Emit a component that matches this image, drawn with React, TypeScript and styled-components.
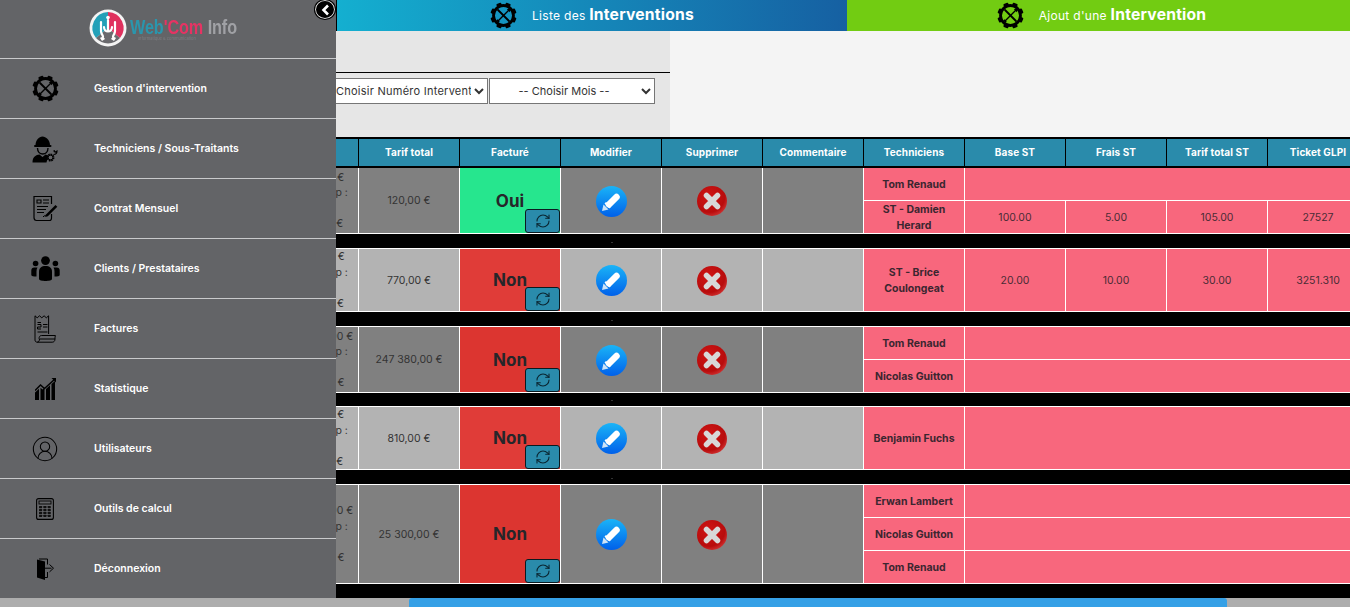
import React from 'react';
import styled, { createGlobalStyle } from 'styled-components';
import { CircleUserRound, RefreshCw } from 'lucide-react';

const Global = createGlobalStyle`
  html, body { margin: 0; padding: 0; height: 100%; overflow: hidden; }
  body { font-family: Inter, "Noto Sans", "Liberation Sans", sans-serif; background: #000; }
  * { box-sizing: border-box; }
`;

const Page = styled.div`
  position: relative;
  width: 1350px;
  height: 607px;
  display: flex;
  flex-direction: column;
  overflow: hidden;
  background: #000;
`;

/* ---------- Sidebar ---------- */
const Sidebar = styled.nav`
  position: absolute;
  top: 0;
  left: 0;
  bottom: 9px;
  width: 336px;
  background: #636467;
  z-index: 5;
  display: flex;
  flex-direction: column;
`;
const LogoBar = styled.div`
  height: 58px;
  display: flex;
  align-items: flex-start;
  padding: 9px 0 0 89px;
  gap: 3px;
`;
const LogoWords = styled.div`
  display: flex;
  flex-direction: column;
  margin-top: 9px;
  filter: blur(0.35px);
`;
const LogoName = styled.div`
  font-family: "Liberation Sans Narrow", "Liberation Sans", sans-serif;
  font-weight: 700;
  font-size: 20px;
  line-height: 18px;
  letter-spacing: -0.1px;
  white-space: nowrap;
  transform: scaleX(0.81);
  transform-origin: left center;
  width: 107px;
`;
const LogoPart = styled.span<{ $c: string }>`
  color: ${p => p.$c};
`;
const LogoTag = styled.div`
  font-size: 4px;
  line-height: 5px;
  color: #7d7e82;
  padding-left: 8px;
  white-space: nowrap;
`;
const CloseBtn = styled.button`
  position: absolute;
  top: 0;
  right: 1px;
  width: 20px;
  height: 19px;
  padding: 0;
  border-radius: 50%;
  background: #000;
  border: 1px solid #ddd;
  outline: 1px solid #000;
  display: flex;
  align-items: center;
  justify-content: center;
`;
const MenuItem = styled.div`
  height: 60px;
  border-top: 1px solid #c9cacc;
  display: flex;
  align-items: center;
`;
const MenuIcon = styled.span`
  width: 90px;
  flex: none;
  display: flex;
  justify-content: center;
  color: #000;
`;
const MenuLabel = styled.span`
  margin-left: 4px;
  color: #fff;
  font-size: 10.5px;
  font-weight: 600;
  letter-spacing: 0;
`;

/* ---------- Header tabs ---------- */
const Tabs = styled.header`
  height: 31px;
  margin-left: 337px;
  display: flex;
  flex: none;
`;
const Tab = styled.div<{ $green?: boolean }>`
  width: ${p => (p.$green ? 503 : 510)}px;
  background: ${p => (p.$green ? '#72cc12' : 'linear-gradient(90deg, #14afd0 0%, #1660a2 100%)')};
  display: flex;
  align-items: center;
  justify-content: center;
  gap: 15px;
  color: #fff;
  padding-left: ${p => (p.$green ? 6 : 0)}px;
`;
const TabGear = styled.span`
  display: flex;
  margin-bottom: 1px;
`;
const TabText = styled.span`
  font-size: 12px;
  letter-spacing: 0.3px;
  white-space: nowrap;
  margin-bottom: 3px;
`;
const TabStrong = styled.strong`
  font-size: 15.7px;
  font-weight: 700;
  letter-spacing: 0.2px;
`;

/* ---------- Filter band ---------- */
const FilterBand = styled.section`
  height: 106px;
  flex: none;
  display: flex;
  background: #f4f4f4;
`;
const FilterPanel = styled.div`
  width: 670px;
  background: #e6e6e6;
`;
const FilterTop = styled.div`
  height: 42px;
  border-bottom: 1px solid #000;
`;
const FilterRow = styled.div`
  display: flex;
  margin: 5px 0 0 317px;
  gap: 1px;
`;
const Select = styled.select<{ $w: number; $ls: number; $pr: number }>`
  width: ${p => p.$w}px;
  height: 26px;
  background: #fff;
  border: 1px solid #767676;
  color: #333;
  font-family: Inter, sans-serif;
  font-size: 11px;
  letter-spacing: ${p => p.$ls}px;
  text-align: center;
  text-align-last: center;
  padding: 0 ${p => p.$pr}px 0 0;
`;

/* ---------- Table ---------- */
const TableWrap = styled.div`
  flex: 1;
  min-height: 0;
  overflow: hidden;
  background: #000;
`;
const Table = styled.table`
  table-layout: fixed;
  width: 1111px;
  margin-left: 258px;
  border-collapse: separate;
  border-spacing: 0;
  font-size: 10.5px;
  line-height: 15.5px;
  color: #333;
`;
const HeadCell = styled.th`
  width: 101px;
  height: 31px;
  padding: 0;
  background: #2a8bab;
  color: #fff;
  font-size: 10px;
  font-weight: 700;
  letter-spacing: 0.1px;
  border-top: 2px solid #000;
  border-bottom: 2px solid #000;
  border-right: 1px solid #000;
`;
const Spacer = styled.tr<{ $h: number }>`
  height: ${p => p.$h}px;
  background: #000;
`;
const SpacerCell = styled.td`
  padding: 0;
  text-align: center;
  line-height: 0;
`;
const Dot = styled.span`
  display: inline-block;
  width: 2px;
  height: 1px;
  background: #333;
`;
const Tr = styled.tr<{ $h: number }>`
  height: ${p => p.$h}px;
`;
const Cell = styled.td<{ $tone: string; $top?: boolean }>`
  position: relative;
  padding: 1px 0 0;
  text-align: center;
  vertical-align: middle;
  overflow: hidden;
  white-space: nowrap;
  background: ${p => p.$tone};
  border-right: 1px solid #fff;
  border-bottom: 1px solid #fff;
  border-top: ${p => (p.$top ? '1px solid #fff' : '0')};
`;
const NoteCell = styled(Cell)`
  padding: 0;
`;
const BilledCell = styled(Cell)`
  padding: 2px 0 0;
  font-size: 17px;
  font-weight: 700;
  color: #26262a;
`;
const TechCell = styled(Cell)`
  padding: 1px 6px 0;
  font-weight: 700;
  color: #3b2630;
  white-space: normal;
`;
const PinkCell = styled(Cell)`
  color: #4a2c36;
`;
const SwapBtn = styled.button`
  position: absolute;
  right: 0;
  bottom: 0;
  width: 35px;
  height: 24px;
  padding: 0;
  border: 1px solid #0a1a20;
  border-radius: 3px;
  background: #2a8bab;
  color: #0a2530;
  display: flex;
  align-items: center;
  justify-content: center;
`;
const ActionIcon = styled.span`
  display: flex;
  justify-content: center;
  align-items: center;
`;
const NoteLine = styled.div`
  min-height: 15.5px;
`;

/* ---------- Scrollbar ---------- */
const ScrollTrack = styled.div`
  height: 9px;
  flex: none;
  background: #adadad;
  padding-left: 409px;
`;
const ScrollThumb = styled.div`
  width: 818px;
  height: 100%;
  background: #35a0e6;
  border-radius: 3px 3px 0 0;
`;

/* ---------- Icons ---------- */
const Gear = ({ size = 27 }: { size?: number }) => (
  <svg width={size} height={size} viewBox="0 0 32 32">
    {[0, 45, 90, 135, 180, 225, 270, 315].map(a => (
      <rect key={a} x="13" y="0.5" width="6" height="5" rx="1" fill="#000" transform={`rotate(${a + 22.5} 16 16)`} />
    ))}
    <circle cx="16" cy="16" r="11.8" fill="none" stroke="#000" strokeWidth="3.4" />
    <path d="M9.5 9.5 22.5 22.5" stroke="#000" strokeWidth="2.2" strokeLinecap="round" />
    <path d="M22.5 9.5 9.5 22.5" stroke="#000" strokeWidth="1.6" strokeLinecap="round" />
    <path d="M20 8.5l3.5 3.5 1-3-1.5-1.5zM7.5 22l2.5 2.5 1.5-1.5-2.500-2.500z" fill="#000" />
  </svg>
);
const TechIcon = () => (
  <svg width="26" height="28" viewBox="0 0 26 28">
    <path d="M3.5 10.5C3.5 5 7 1.5 10.5 1.5S18 5 18 10.5z" fill="#000" />
    <rect x="2" y="10" width="17.5" height="2" rx="1" fill="#000" />
    <path d="M5.5 13c0 8 10.500 8 10.500 0" fill="none" stroke="#000" strokeWidth="1.4" />
    <path d="M0.500 27.500c0-6 3.500-7.500 7-8l3 2.500 3-2.500c1 .2 2 .5 2.800 1l-1.800 7z" fill="#000" />
    <circle cx="18.500" cy="22.500" r="3" fill="none" stroke="#000" strokeWidth="2" strokeDasharray="1.600 .7" />
    <circle cx="18.500" cy="22.500" r="2.400" fill="none" stroke="#000" strokeWidth="1" />
    <path d="M21.500 19.500c2.500 0 3.500-1.500 3.500-3.500l-1.500 1-1.300-.5v-1.500" fill="none" stroke="#000" strokeWidth="1.200" />
  </svg>
);
const ContractIcon = () => (
  <svg width="26" height="27" viewBox="0 0 26 27" fill="none" stroke="#000">
    <path d="M19.500 9V1.500H2v21c0 1.800 1 3 2.500 3h13c1.200 0 2-1 2-2.500v-4" strokeWidth="1.200" />
    <path d="M5 5h4v3H5zM11 5h6M11 8h6M5 11.500h11M5 14.500h9M5 17.500h7" strokeWidth="1.100" />
    <path d="M11 22c1.500-2 2.500-1 3.500-1.500" strokeWidth="1" />
    <path d="M14 19.500 23.500 10l1.800 1.800-9.500 9.500-2.600.8z" fill="#000" stroke="none" />
  </svg>
);
const UsersIcon = () => (
  <svg width="29" height="25" viewBox="0 0 29 25" fill="#000">
    <circle cx="14.500" cy="4.600" r="4.400" />
    <circle cx="4.600" cy="7.500" r="2.800" />
    <circle cx="24.400" cy="7.500" r="2.800" />
    <path d="M8 23V15.500C8 12 10.500 10 14.500 10S21 12 21 15.500V23c0 2.600-13 2.600-13 0z" />
    <path d="M6.500 11.500H3.200C1.400 11.500.3 12.800.3 14.500V19c0 1.200 2.200 1.600 5.200 1.600V15.500c0-1.500.3-2.900 1-4z" />
    <path d="M22.500 11.500h3.300c1.800 0 2.900 1.300 2.900 3V19c0 1.200-2.200 1.600-5.200 1.600V15.500c0-1.500-.3-2.900-1-4z" />
  </svg>
);
const InvoiceIcon = () => (
  <svg width="22" height="28" viewBox="0 0 22 28" fill="none" stroke="#000" strokeWidth="1">
    <path d="M1 .8l2.200 2 2.300-2 2.300 2 2.300-2 2.200 2 2.300-2V19" />
    <path d="M1 .8V25c0 1.400 1 2.200 2.200 2.200h15c1.500 0 2.800-1 2.800-3.200H5.500c0 2-1 3.200-2.300 3.200" />
    <path d="M5 23.800c0-2 1-3.300 2.400-3.300h14c-.4 1-.4 2.300-.4 3.500" />
    <path d="M3.500 7.500H7M3.500 9.500h3.500v2.500H3.500v2H7M9 9.500h4.500M9 12h4.500M3.500 17h10" />
  </svg>
);
const ChartIcon = () => (
  <svg width="21" height="22" viewBox="0 0 21 22" fill="#000">
    <path d="M0 22v-7.500l4-3.800V22zM5.500 22V9.700l2 1.800 2-2V22zM11 22v-11l4-3.800V22zM16.500 22V6l3.500-3V22z" />
    <path d="M0 12.500 5.500 7l4 3.500L20 1" fill="none" stroke="#000" strokeWidth="1.500" />
    <path d="M16.500 0H21v4.500z" />
  </svg>
);
const CalcIcon = () => (
  <svg width="18" height="22" viewBox="0 0 18 22">
    <rect x=".6" y=".6" width="16.800" height="20.800" rx="2" fill="none" stroke="#000" strokeWidth="1.100" />
    <rect x="3" y="3" width="12" height="3" fill="none" stroke="#000" strokeWidth=".9" />
    {[0, 1, 2, 3].flatMap(r =>
      [0, 1, 2].map(c => <rect key={`${r}${c}`} x={3 + c * 4.3} y={8 + r * 2.9} width="3.200" height="2.200" rx=".6" fill="#111" />)
    )}
  </svg>
);
const DoorIcon = () => (
  <svg width="19" height="22" viewBox="0 0 19 22">
    <path d="M1 1.500 9 3.500V22L1 19.500z" fill="#000" />
    <path d="M3 1h8.500v5.500M11.500 14v5.500H9" fill="none" stroke="#000" strokeWidth="1" />
    <path d="M9 10.200h6.500M13.500 6.500l4 3.700-4 3.700" fill="none" stroke="#000" strokeWidth="1" />
  </svg>
);
const Chevron = () => (
  <svg width="9" height="12" viewBox="0 0 9 12">
    <path d="M7 1.500 2.500 6 7 10.500" fill="none" stroke="#fff" strokeWidth="2.600" />
  </svg>
);
const LogoMark = () => (
  <svg width="38" height="38" viewBox="0 0 38 38">
    <circle cx="19" cy="19" r="18.500" fill="#f4f4f4" />
    <path d="M19 3A16 16 0 0 0 7 29L19 19z" fill="#23a0b8" />
    <path d="M19 3A16 16 0 0 1 31 29L19 19z" fill="#e0315e" />
    <path d="M7 29A16 16 0 0 0 31 29L19 19z" fill="#6a6a6e" />
    <g fill="none" stroke="#fff" strokeWidth="2.200" strokeLinecap="round">
      <path d="M12 13v9c0 3 2 4 2 6" />
      <path d="M19 11v11" />
      <path d="M26 13v9c0 3-2 4-2 6" />
      <path d="M15 18c0 6 8 6 8 0" />
    </g>
    <circle cx="19" cy="8.500" r="1.800" fill="#fff" />
    <path d="M11 29c2-2 4-1 5 1l-3 2zM27 29c-2-2-4-1-5 1l3 2z" fill="#fff" />
  </svg>
);
const EditIcon = ({ id }: { id: string }) => (
  <svg width="31" height="31" viewBox="0 0 31 31">
    <defs>
      <linearGradient id={id} x1="0" y1="0" x2="0" y2="1">
        <stop offset="0" stopColor="#1ab4f7" />
        <stop offset="1" stopColor="#0060ea" />
      </linearGradient>
    </defs>
    <circle cx="15.500" cy="15.500" r="15.500" fill={`url(#${id})`} />
    <path d="M13 18.500 20.500 11" stroke="#fff" strokeWidth="6.500" strokeLinecap="round" />
    <path d="M6 25l1.500-6.500 5 5z" fill="#cfe4f7" />
    <path d="M8.500 17.500l5 5 1.500-1.500-5-5z" fill="#fff" />
  </svg>
);
const DeleteIcon = ({ id }: { id: string }) => (
  <svg width="30" height="30" viewBox="0 0 30 30">
    <defs>
      <radialGradient id={id} cx="0.4" cy="0.35" r="0.75">
        <stop offset="0" stopColor="#d01515" />
        <stop offset="0.7" stopColor="#b80c0c" />
        <stop offset="1" stopColor="#d84040" />
      </radialGradient>
    </defs>
    <circle cx="15" cy="15" r="15" fill={`url(#${id})`} />
    <path d="M9.500 9.500 20.500 20.500M20.500 9.500 9.500 20.500" stroke="#d8d8d8" strokeWidth="5.500" strokeLinecap="round" />
  </svg>
);

/* ---------- Data ---------- */
const menu: { label: string; icon: React.ReactNode }[] = [
  { label: "Gestion d'intervention", icon: <Gear /> },
  { label: 'Techniciens / Sous-Traitants', icon: <TechIcon /> },
  { label: 'Contrat Mensuel', icon: <ContractIcon /> },
  { label: 'Clients / Prestataires', icon: <UsersIcon /> },
  { label: 'Factures', icon: <InvoiceIcon /> },
  { label: 'Statistique', icon: <ChartIcon /> },
  { label: 'Utilisateurs', icon: <CircleUserRound size={28} strokeWidth={0.9} /> },
  { label: 'Outils de calcul', icon: <CalcIcon /> },
  { label: 'Déconnexion', icon: <DoorIcon /> },
];

const headers = ['Tarif', 'Tarif total', 'Facturé', 'Modifier', 'Supprimer', 'Commentaire', 'Techniciens', 'Base ST', 'Frais ST', 'Tarif total ST', 'Ticket GLPI'];

type Tech = { name: string; st?: [string, string, string, string] };
type Row = { notes: string[]; total: string; billed: boolean; tone: string; gap: number; heights: number[]; techs: Tech[] };

const DARK = '#808080';
const LIGHT = '#b3b3b3';
const PINK = '#f8677d';

const rows: Row[] = [
  {
    notes: ['Fixe : 120,00 €', 'Frais de transp :', '0,00', 'Tot. : 120,00 €'],
    total: '120,00 €', billed: true, tone: DARK, gap: 0, heights: [33, 33],
    techs: [{ name: 'Tom Renaud' }, { name: 'ST - Damien Herard', st: ['100.00', '5.00', '105.00', '27527'] }],
  },
  {
    notes: ['Fixe : 770,00 €', 'Frais de transp :', '0,00', 'Tot. : 770,00 €'],
    total: '770,00 €', billed: false, tone: LIGHT, gap: 14, heights: [64],
    techs: [{ name: 'ST - Brice Coulongeat', st: ['20.00', '10.00', '30.00', '3251.310'] }],
  },
  {
    notes: ['Fixe : 24 380,00 €', 'Frais de transp :', '0,00', 'Tot. : 380,00 €'],
    total: '247 380,00 €', billed: false, tone: DARK, gap: 14, heights: [34, 33],
    techs: [{ name: 'Tom Renaud' }, { name: 'Nicolas Guitton' }],
  },
  {
    notes: ['Fixe : 810,00 €', 'Frais de transp :', '0,00', 'Tot. : 810,00 €'],
    total: '810,00 €', billed: false, tone: LIGHT, gap: 13, heights: [64],
    techs: [{ name: 'Benjamin Fuchs' }],
  },
  {
    notes: ['Fixe : 25 300,00 €', 'Frais de transp :', '0,00', 'Tot. : 300,00 €'],
    total: '25 300,00 €', billed: false, tone: DARK, gap: 14, heights: [34, 33, 33],
    techs: [{ name: 'Erwan Lambert' }, { name: 'Nicolas Guitton' }, { name: 'Tom Renaud' }],
  },
];

const billedColor = (r: Row, i: number) => (r.billed ? '#26e68e' : i % 2 === 0 ? '#dc3530' : '#e03c38');

export default function App() {
  return (
    <Page>
      <Global />
      <Sidebar>
        <LogoBar>
          <LogoMark />
          <LogoWords>
            <LogoName>
              <LogoPart $c="#2a96ad">Web</LogoPart>
              <LogoPart $c="#e63363">'Com</LogoPart>{' '}
              <LogoPart $c="#a0a1a5">Info</LogoPart>
            </LogoName>
            <LogoTag>Informatique &amp; communication</LogoTag>
          </LogoWords>
        </LogoBar>
        <CloseBtn aria-label="Fermer"><Chevron /></CloseBtn>
        {menu.map(m => (
          <MenuItem key={m.label}>
            <MenuIcon>{m.icon}</MenuIcon>
            <MenuLabel>{m.label}</MenuLabel>
          </MenuItem>
        ))}
      </Sidebar>

      <Tabs>
        <Tab>
          <TabGear><Gear /></TabGear>
          <TabText>Liste des <TabStrong>Interventions</TabStrong></TabText>
        </Tab>
        <Tab $green>
          <TabGear><Gear /></TabGear>
          <TabText>Ajout d'une <TabStrong>Intervention</TabStrong></TabText>
        </Tab>
      </Tabs>

      <FilterBand>
        <FilterPanel>
          <FilterTop />
          <FilterRow>
            <Select $w={171} $ls={0.25} $pr={0}><option>-- Choisir Numéro Intervention --</option></Select>
            <Select $w={166} $ls={0} $pr={4}><option>-- Choisir Mois --</option></Select>
          </FilterRow>
        </FilterPanel>
      </FilterBand>

      <TableWrap>
        <Table>
          <thead>
            <tr>{headers.map(h => <HeadCell key={h}>{h}</HeadCell>)}</tr>
          </thead>
          <tbody>
            {rows.map((r, i) => (
              <React.Fragment key={i}>
                {r.gap > 0 && (
                  <Spacer $h={r.gap}>
                    <SpacerCell colSpan={3} />
                    <SpacerCell><Dot /></SpacerCell>
                    <SpacerCell colSpan={7} />
                  </Spacer>
                )}
                {r.techs.map((t, k) => {
                  const top = i > 0 && k === 0;
                  return (
                    <Tr key={k} $h={r.heights[k]}>
                      {k === 0 && (
                        <>
                          <NoteCell $tone={r.tone} $top={top} rowSpan={r.techs.length}>
                            {r.notes.map((n, x) => <NoteLine key={x}>{n}</NoteLine>)}
                          </NoteCell>
                          <Cell $tone={r.tone} $top={top} rowSpan={r.techs.length}>{r.total}</Cell>
                          <BilledCell $tone={billedColor(r, i)} $top={top} rowSpan={r.techs.length}>
                            {r.billed ? 'Oui' : 'Non'}
                            <SwapBtn aria-label="Changer"><RefreshCw size={16} strokeWidth={1.6} /></SwapBtn>
                          </BilledCell>
                          <Cell $tone={r.tone} $top={top} rowSpan={r.techs.length}>
                            <ActionIcon><EditIcon id={`e${i}`} /></ActionIcon>
                          </Cell>
                          <Cell $tone={r.tone} $top={top} rowSpan={r.techs.length}>
                            <ActionIcon><DeleteIcon id={`d${i}`} /></ActionIcon>
                          </Cell>
                          <Cell $tone={r.tone} $top={top} rowSpan={r.techs.length} />
                        </>
                      )}
                      <TechCell $tone={PINK} $top={top}>{t.name}</TechCell>
                      {t.st
                        ? t.st.map((v, x) => <PinkCell key={x} $tone={PINK} $top={top}>{v}</PinkCell>)
                        : <PinkCell $tone={PINK} $top={top} colSpan={4} />}
                    </Tr>
                  );
                })}
              </React.Fragment>
            ))}
          </tbody>
        </Table>
      </TableWrap>

      <ScrollTrack><ScrollThumb /></ScrollTrack>
    </Page>
  );
}
